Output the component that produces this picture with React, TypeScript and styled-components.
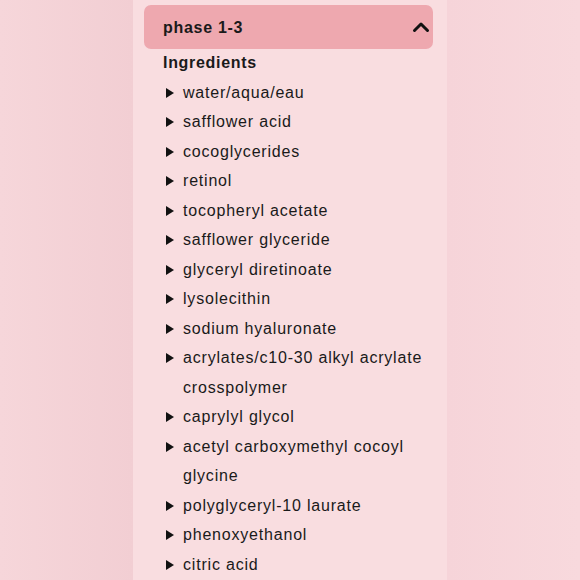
import React from "react";
import styled, { createGlobalStyle } from "styled-components";

const Global = createGlobalStyle`
  html, body { margin: 0; padding: 0; }
  body {
    width: 580px; height: 580px; overflow: hidden;
    background: linear-gradient(90deg, #f6d6da 0%, #f2ced3 23%, #f9dde0 23%, #f9dde0 77%, #f6d4d9 77%, #f8d9dd 100%);
    font-family: "Liberation Sans", Arial, sans-serif;
  }
`;

const Page = styled.div`
  display: flex;
  height: 580px;
  padding-left: 134px;
`;

const Panel = styled.div`
  width: 312px;
  height: 580px;
  box-sizing: border-box;
  background: #f9dde0;
  padding: 5px 13px 0 10px;
  color: #1a1a1a;
`;

const Header = styled.div`
  height: 44px;
  border-radius: 7px;
  background: #eea8af;
  display: flex;
  align-items: center;
  justify-content: space-between;
  padding: 0 3px 0 19px;
`;

const Title = styled.span`
  font-weight: 700;
  font-size: 16px;
  letter-spacing: 0.7px;
  margin-top: 1px;
`;

const SectionTitle = styled.div`
  font-weight: 700;
  font-size: 16px;
  letter-spacing: 0.7px;
  line-height: 29.5px;
  padding-left: 19px;
  margin-top: -1px;
`;

const List = styled.ul`
  list-style: none;
  margin: 0;
  padding: 0 0 0 22px;
`;

const Item = styled.li`
  display: flex;
  align-items: flex-start;
  gap: 9px;
  font-size: 16px;
  letter-spacing: 0.8px;
  line-height: 29.5px;
`;

const Triangle = styled.span`
  flex: none;
  width: 0;
  height: 0;
  margin-top: 10px;
  border-top: 5px solid transparent;
  border-bottom: 5px solid transparent;
  border-left: 8px solid #111;
`;

const items = [
  "water/aqua/eau",
  "safflower acid",
  "cocoglycerides",
  "retinol",
  "tocopheryl acetate",
  "safflower glyceride",
  "glyceryl diretinoate",
  "lysolecithin",
  "sodium hyaluronate",
  "acrylates/c10-30 alkyl acrylate crosspolymer",
  "caprylyl glycol",
  "acetyl carboxymethyl cocoyl glycine",
  "polyglyceryl-10 laurate",
  "phenoxyethanol",
  "citric acid",
];

export default function App() {
  return (
    <>
      <Global />
      <Page>
        <Panel>
          <Header>
            <Title>phase 1-3</Title>
            <svg width="18" height="12" viewBox="0 0 18 12">
              <path d="M2.5 9.5 L9 3 L15.5 9.5" fill="none" stroke="#111" strokeWidth="3" strokeLinecap="round" strokeLinejoin="round" />
            </svg>
          </Header>
          <SectionTitle>Ingredients</SectionTitle>
          <List>
            {items.map((t) => (
              <Item key={t}>
                <Triangle />
                <span>{t}</span>
              </Item>
            ))}
          </List>
        </Panel>
      </Page>
    </>
  );
}
